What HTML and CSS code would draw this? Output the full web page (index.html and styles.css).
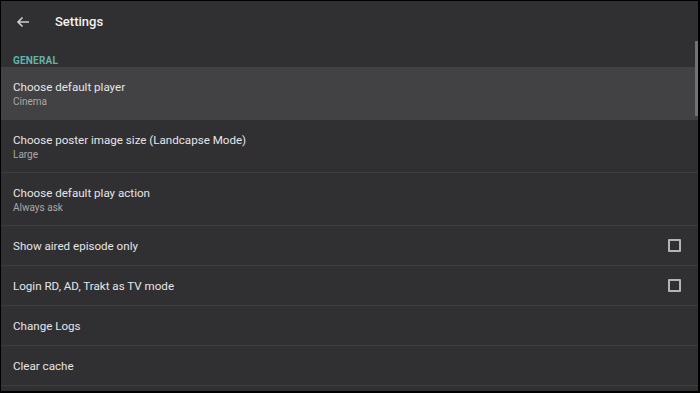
FILE: index.html
```html
<!DOCTYPE html>
<html lang="en">
<head>
    <meta charset="UTF-8">
    <meta name="viewport" content="width=device-width, initial-scale=1.0">
    <title>Settings</title>
    <link rel="stylesheet" href="styles.css">
</head>
<body>
    <div class="app">
        <div class="toolbar">
            <svg class="back" width="14" height="12" viewBox="0 0 14 12">
                <path d="M13 6H2M6.5 1.5L2 6l4.5 4.5" fill="none" stroke="#cfcfcf" stroke-width="1.6"/>
            </svg>
            <h1>Settings</h1>
        </div>

        <div class="list">
            <div class="section">GENERAL</div>

            <div class="row two active">
                <div class="title">Choose default player</div>
                <div class="sub">Cinema</div>
            </div>
            <div class="row two">
                <div class="title">Choose poster image size (Landcapse Mode)</div>
                <div class="sub">Large</div>
            </div>
            <div class="row two">
                <div class="title">Choose default play action</div>
                <div class="sub">Always ask</div>
            </div>
            <div class="row">
                <div class="title">Show aired episode only</div>
                <span class="check"></span>
            </div>
            <div class="row">
                <div class="title">Login RD, AD, Trakt as TV mode</div>
                <span class="check"></span>
            </div>
            <div class="row">
                <div class="title">Change Logs</div>
            </div>
            <div class="row">
                <div class="title">Clear cache</div>
            </div>
            <div class="row">
                <div class="title">&nbsp;</div>
            </div>
        </div>

        <div class="scrollbar"></div>
    </div>
</body>
</html>
```

FILE: styles.css
```css
html, body {
    margin: 0;
    padding: 0;
    background: #000;
    overflow: hidden;
}
body {
    font-family: Roboto, "Noto Sans", sans-serif;
    width: 700px;
    height: 393px;
}
.app {
    position: relative;
    margin: 1px 2px 0 1px;
    height: 390px;
    background: #302f31;
    overflow: hidden;
}
.toolbar {
    display: flex;
    align-items: center;
    height: 41px;
    padding-left: 15px;
}
.back {
    display: block;
    margin-right: 25px;
}
.toolbar h1 {
    margin: 0;
    font-size: 13px;
    font-weight: 500;
    color: #f2f2f2;
}
.section {
    height: 25px;
    box-sizing: border-box;
    padding: 13px 0 0 12px;
    font-size: 10px;
    font-weight: 700;
    color: #62b5aa;
    letter-spacing: 0.2px;
}
.row {
    display: flex;
    align-items: center;
    justify-content: space-between;
    height: 39px;
    padding: 0 17px 0 12px;
    border-bottom: 1px solid #3d3c3e;
}
.row.two {
    flex-direction: column;
    align-items: flex-start;
    justify-content: center;
    height: 52px;
}
.row.active {
    background: #424143;
    border-bottom-color: #424143;
}
.title {
    font-size: 11.6px;
    color: #e6e6e6;
}
.sub {
    margin-top: 2px;
    font-size: 10px;
    color: #a9a9a9;
}
.check {
    width: 9px;
    height: 9px;
    border: 2px solid #b4b4b4;
    border-radius: 1px;
}
.scrollbar {
    position: absolute;
    top: 40px;
    right: 0;
    width: 3px;
    height: 75px;
    background: #727173;
}
```
